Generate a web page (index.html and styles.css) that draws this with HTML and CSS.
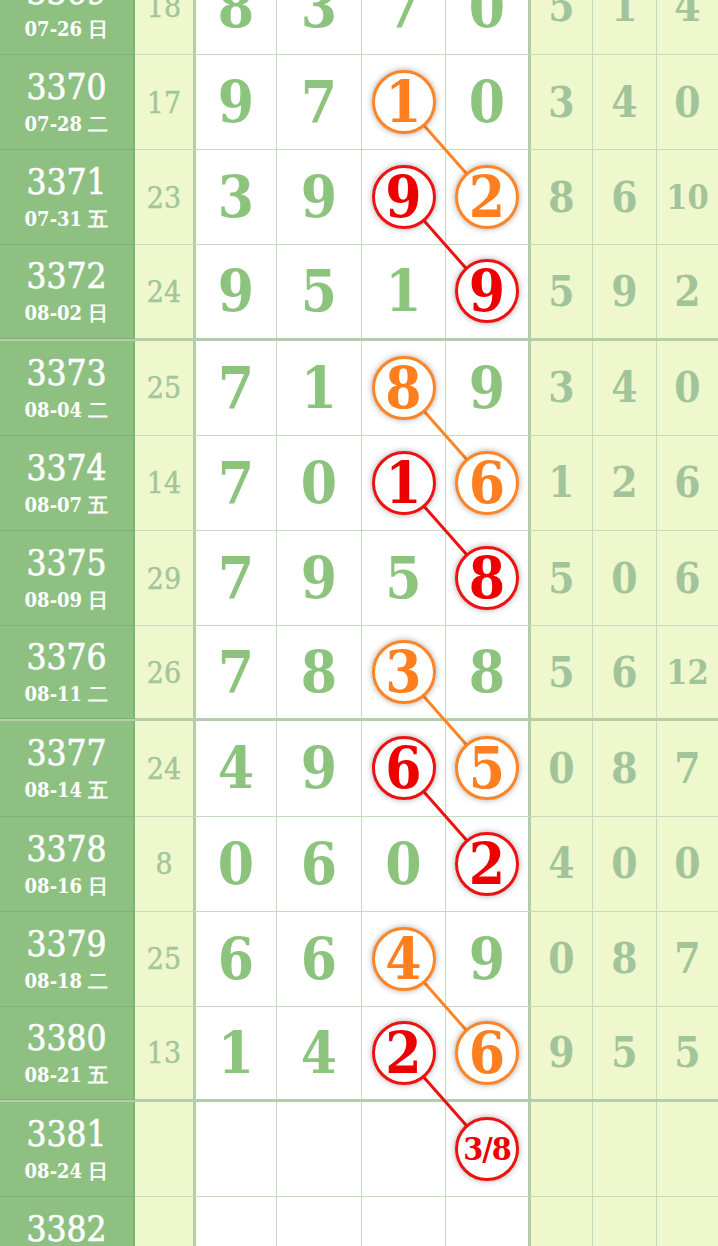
FILE: index.html
```html
<!DOCTYPE html>
<html lang="zh">

<head>
    <meta charset="UTF-8">
    <meta name="viewport" content="width=device-width, initial-scale=1.0">
    <title>走势图</title>
    <link rel="stylesheet" href="styles.css">
</head>

<body>
    <div class="board">
        <!-- connecting lines between marked numbers -->
        <svg class="links" width="718" height="1300" viewBox="0 0 718 1300">
            <g stroke="#ff8426" stroke-width="3">
                <line x1="404" y1="142.8" x2="488" y2="238" />
                <line x1="404" y1="428.4" x2="488" y2="523.6" />
                <line x1="404" y1="714" x2="488" y2="809.2" />
                <line x1="404" y1="999.6" x2="488" y2="1094.8" />
            </g>
            <g stroke="#ee1111" stroke-width="3">
                <line x1="404" y1="238" x2="488" y2="333.2" />
                <line x1="404" y1="523.6" x2="488" y2="618.8" />
                <line x1="404" y1="809.2" x2="488" y2="904.4" />
                <line x1="404" y1="1094.8" x2="488" y2="1190" />
            </g>
        </svg>

        <div class="row">
            <div class="issue"><span class="no">3369</span><span class="date">07-26 日</span></div>
            <div class="sum">18</div>
            <div class="num"><span>8</span></div>
            <div class="num"><span>3</span></div>
            <div class="num"><span>7</span></div>
            <div class="num"><span>0</span></div>
            <div class="stat first">5</div>
            <div class="stat">1</div>
            <div class="stat">4</div>
        </div>
        <div class="row">
            <div class="issue"><span class="no">3370</span><span class="date">07-28 二</span></div>
            <div class="sum">17</div>
            <div class="num"><span>9</span></div>
            <div class="num"><span>7</span></div>
            <div class="num"><span class="ball orange">1</span></div>
            <div class="num"><span>0</span></div>
            <div class="stat first">3</div>
            <div class="stat">4</div>
            <div class="stat">0</div>
        </div>
        <div class="row">
            <div class="issue"><span class="no">3371</span><span class="date">07-31 五</span></div>
            <div class="sum">23</div>
            <div class="num"><span>3</span></div>
            <div class="num"><span>9</span></div>
            <div class="num"><span class="ball red">9</span></div>
            <div class="num"><span class="ball orange">2</span></div>
            <div class="stat first">8</div>
            <div class="stat">6</div>
            <div class="stat wide">10</div>
        </div>
        <div class="row group-end">
            <div class="issue"><span class="no">3372</span><span class="date">08-02 日</span></div>
            <div class="sum">24</div>
            <div class="num"><span>9</span></div>
            <div class="num"><span>5</span></div>
            <div class="num"><span>1</span></div>
            <div class="num"><span class="ball red">9</span></div>
            <div class="stat first">5</div>
            <div class="stat">9</div>
            <div class="stat">2</div>
        </div>
        <div class="row">
            <div class="issue"><span class="no">3373</span><span class="date">08-04 二</span></div>
            <div class="sum">25</div>
            <div class="num"><span>7</span></div>
            <div class="num"><span>1</span></div>
            <div class="num"><span class="ball orange">8</span></div>
            <div class="num"><span>9</span></div>
            <div class="stat first">3</div>
            <div class="stat">4</div>
            <div class="stat">0</div>
        </div>
        <div class="row">
            <div class="issue"><span class="no">3374</span><span class="date">08-07 五</span></div>
            <div class="sum">14</div>
            <div class="num"><span>7</span></div>
            <div class="num"><span>0</span></div>
            <div class="num"><span class="ball red">1</span></div>
            <div class="num"><span class="ball orange">6</span></div>
            <div class="stat first">1</div>
            <div class="stat">2</div>
            <div class="stat">6</div>
        </div>
        <div class="row">
            <div class="issue"><span class="no">3375</span><span class="date">08-09 日</span></div>
            <div class="sum">29</div>
            <div class="num"><span>7</span></div>
            <div class="num"><span>9</span></div>
            <div class="num"><span>5</span></div>
            <div class="num"><span class="ball red">8</span></div>
            <div class="stat first">5</div>
            <div class="stat">0</div>
            <div class="stat">6</div>
        </div>
        <div class="row group-end">
            <div class="issue"><span class="no">3376</span><span class="date">08-11 二</span></div>
            <div class="sum">26</div>
            <div class="num"><span>7</span></div>
            <div class="num"><span>8</span></div>
            <div class="num"><span class="ball orange">3</span></div>
            <div class="num"><span>8</span></div>
            <div class="stat first">5</div>
            <div class="stat">6</div>
            <div class="stat wide">12</div>
        </div>
        <div class="row">
            <div class="issue"><span class="no">3377</span><span class="date">08-14 五</span></div>
            <div class="sum">24</div>
            <div class="num"><span>4</span></div>
            <div class="num"><span>9</span></div>
            <div class="num"><span class="ball red">6</span></div>
            <div class="num"><span class="ball orange">5</span></div>
            <div class="stat first">0</div>
            <div class="stat">8</div>
            <div class="stat">7</div>
        </div>
        <div class="row">
            <div class="issue"><span class="no">3378</span><span class="date">08-16 日</span></div>
            <div class="sum">8</div>
            <div class="num"><span>0</span></div>
            <div class="num"><span>6</span></div>
            <div class="num"><span>0</span></div>
            <div class="num"><span class="ball red">2</span></div>
            <div class="stat first">4</div>
            <div class="stat">0</div>
            <div class="stat">0</div>
        </div>
        <div class="row">
            <div class="issue"><span class="no">3379</span><span class="date">08-18 二</span></div>
            <div class="sum">25</div>
            <div class="num"><span>6</span></div>
            <div class="num"><span>6</span></div>
            <div class="num"><span class="ball orange">4</span></div>
            <div class="num"><span>9</span></div>
            <div class="stat first">0</div>
            <div class="stat">8</div>
            <div class="stat">7</div>
        </div>
        <div class="row group-end">
            <div class="issue"><span class="no">3380</span><span class="date">08-21 五</span></div>
            <div class="sum">13</div>
            <div class="num"><span>1</span></div>
            <div class="num"><span>4</span></div>
            <div class="num"><span class="ball red">2</span></div>
            <div class="num"><span class="ball orange">6</span></div>
            <div class="stat first">9</div>
            <div class="stat">5</div>
            <div class="stat">5</div>
        </div>
        <div class="row">
            <div class="issue"><span class="no">3381</span><span class="date">08-24 日</span></div>
            <div class="sum"></div>
            <div class="num"></div>
            <div class="num"></div>
            <div class="num"></div>
            <div class="num"><span class="ball red small">3/8</span></div>
            <div class="stat first"></div>
            <div class="stat"></div>
            <div class="stat"></div>
        </div>
        <div class="row">
            <div class="issue"><span class="no">3382</span><span class="date">08-26 二</span></div>
            <div class="sum"></div>
            <div class="num"></div>
            <div class="num"></div>
            <div class="num"></div>
            <div class="num"></div>
            <div class="stat first"></div>
            <div class="stat"></div>
            <div class="stat"></div>
        </div>
    </div>
</body>

</html>
```

FILE: styles.css
```css
body {
    margin: 0;
    overflow: hidden;
    background-color: #fff;
    font-family: "DejaVu Serif Condensed", "DejaVu Serif", serif;
    font-stretch: condensed;
}

.board {
    position: relative;
    width: 718px;
    margin-top: -40.2px;
}

.links {
    position: absolute;
    left: 0;
    top: 0;
    z-index: 1;
}

.row {
    display: grid;
    grid-template-columns: 135px 58px 84px 85px 84px 82px 65px 64px 61px;
    height: 95.2px;
    box-sizing: border-box;
    border-bottom: 1px solid #c6dbbd;
}

.row.group-end {
    border-bottom: 3px solid #b5cdab;
}

.row > div {
    display: flex;
    align-items: center;
    justify-content: center;
    box-sizing: border-box;
}

.issue {
    flex-direction: column;
    background-color: #8ec181;
    border-right: 2px solid #80b473;
    color: #fff;
    padding-top: 2px;
    margin-bottom: -1px;
    box-shadow: inset 0 -1px 0 #7fb171;
}

.issue .no {
    font-size: 35px;
    line-height: 34px;
    -webkit-text-stroke: 0.6px #fff;
}

.issue .date {
    margin-top: 7px;
    font-size: 20px;
    font-weight: bold;
    line-height: 26px;
}

.sum {
    background-color: #eff7cc;
    color: #a3c59b;
    font-size: 30px;
    -webkit-text-stroke: 0.4px #a3c59b;
}

.num {
    background-color: #fff;
    color: #8cc47e;
    font-size: 58px;
    font-weight: bold;
    line-height: 1;
    border-right: 1px solid #c6dbbd;
}

.num:nth-child(3) {
    border-left: 3px solid #b5cdab;
}

.num:nth-child(6) {
    border-right: none;
}

.stat {
    background-color: #eff7cc;
    color: #a2c49a;
    font-size: 42px;
    font-weight: bold;
    border-right: 1px solid #c6dbbd;
}

.stat.wide {
    font-size: 34px;
}

.stat.first {
    border-left: 3px solid #b5cdab;
}

.stat:last-child {
    border-right: none;
}

.ball {
    position: relative;
    z-index: 2;
    display: flex;
    align-items: center;
    justify-content: center;
    width: 64px;
    height: 64px;
    box-sizing: border-box;
    border-radius: 50%;
    border: 3px solid;
    background-color: #fff;
    box-shadow: 0 0 6px rgba(0, 0, 0, 0.35);
}

.ball.orange {
    color: #ff7f1f;
    border-color: #ff8426;
}

.ball.red {
    color: #ee0000;
    border-color: #ee1111;
}

.ball.small {
    font-size: 32px;
    letter-spacing: -1px;
}
```
